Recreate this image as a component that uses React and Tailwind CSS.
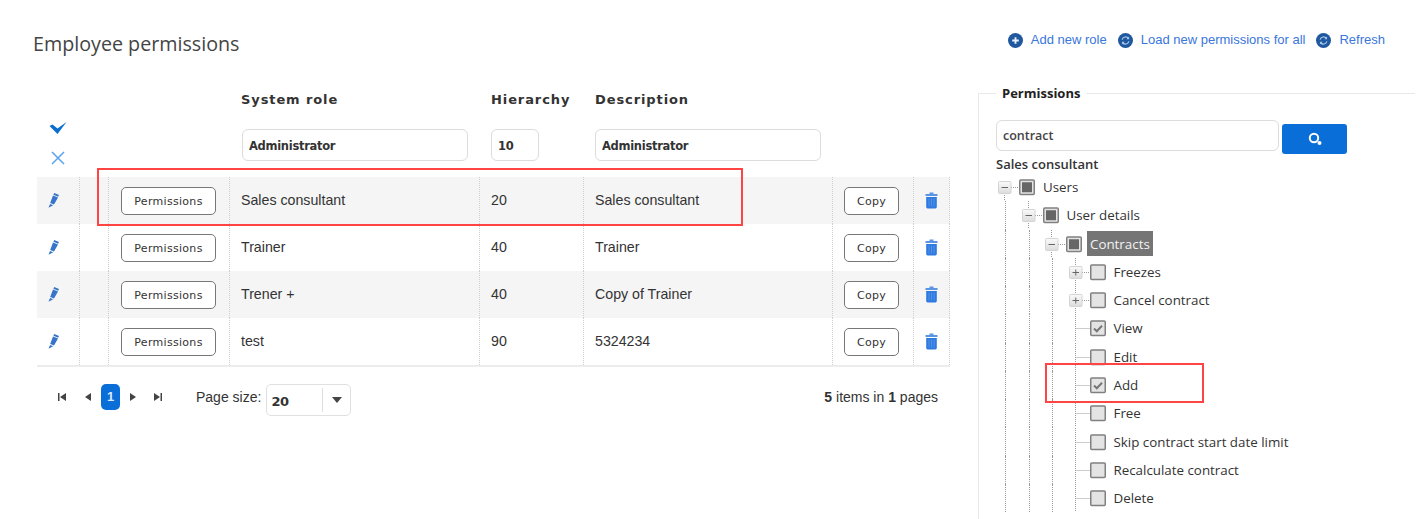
import React from "react";

const cols = "grid grid-cols-[42px_29px_121px_250px_104px_249px_81px_37px]";
const cell = "border-l border-dotted border-[#cfcfcf] flex items-center";

function Pencil() {
  return (
    <svg width="11" height="15" viewBox="0 0 11 15" className="mr-0.5">
      <path d="M6.2 0 L11 2 L10.2 3.7 L5.4 1.7 Z M5 2.5 L10 4.6 L6 11.6 L2.2 10 Z M2 11 L5.2 12.3 L0.5 14.8 Z" fill="#3574c8" />
    </svg>
  );
}

function Trash() {
  return (
    <svg width="13" height="17" viewBox="0 0 13 17">
      <path d="M4.5 0.5 h4 v1.5 h4 v2 h-12 v-2 h4 Z" fill="#5a94e4" />
      <path d="M1.2 5 h10.6 v10 a1.4 1.4 0 0 1 -1.4 1.4 h-7.8 a1.4 1.4 0 0 1 -1.4 -1.4 Z" fill="#2f7ae0" />
      <path d="M4 6.5 v8 M6.5 6.5 v8 M9 6.5 v8" stroke="#5f9cea" strokeWidth="0.7" />
    </svg>
  );
}

function CircleIcon({ kind }) {
  return (
    <svg width="15" height="15" viewBox="0 0 16 16" className="shrink-0">
      <circle cx="8" cy="8" r="8" fill="#20589f" />
      {kind === "plus" ? (
        <path d="M8 4.5 v7 M4.5 8 h7" stroke="#e8f0fa" strokeWidth="2" />
      ) : (
        <>
          <path d="M4.4 7 A3.8 3.8 0 0 1 11 5.6 M11.6 9 A3.8 3.8 0 0 1 5 10.4" fill="none" stroke="#a9c8ec" strokeWidth="1.3" />
          <path d="M11.8 3.8 v2.8 h-2.8 Z M4.2 12.2 v-2.8 h2.8 Z" fill="#a9c8ec" />
        </>
      )}
    </svg>
  );
}

function Action({ kind, children }) {
  return (
    <a className="flex items-center gap-[8px] text-[13px] text-[#3a76dc] font-['Liberation_Sans',sans-serif]">
      <CircleIcon kind={kind} />
      {children}
    </a>
  );
}

function OutlineButton({ w, children }) {
  return (
    <button className={`${w} h-[28px] rounded-[5px] border border-[#777] bg-white pt-[3px] text-[11px] tracking-[0.3px] text-[#333] font-['DejaVu_Sans',sans-serif]`}>
      {children}
    </button>
  );
}

function Row({ name, level, desc, odd }) {
  const text = "pl-[11px] text-[14.2px] text-[#333] font-['Liberation_Sans',sans-serif]";
  return (
    <div className={`${cols} h-[47px] ${odd ? "bg-[#f5f5f5]" : "bg-white"}`}>
      <div className="flex items-center justify-center pr-[8px]"><Pencil /></div>
      <div className={cell} />
      <div className={`${cell} pl-3`}><OutlineButton w="w-[95px]">Permissions</OutlineButton></div>
      <div className={`${cell} ${text}`}>{name}</div>
      <div className={`${cell} ${text}`}>{level}</div>
      <div className={`${cell} ${text}`}>{desc}</div>
      <div className={`${cell} pl-[11px]`}><OutlineButton w="w-[55px]">Copy</OutlineButton></div>
      <div className={`${cell} border-r pl-[11px]`}><Trash /></div>
    </div>
  );
}

function EditInput({ w, value }) {
  return (
    <input
      readOnly
      value={value}
      className={`${w} h-[32px] rounded-[6px] border border-[#dcdcdc] bg-white px-[6px] pt-[2px] text-[11.5px] font-bold text-[#333] font-['DejaVu_Sans',sans-serif] tracking-[-0.3px] outline-none`}
    />
  );
}

function PagerIcon({ d }) {
  return (
    <svg width="10" height="10" viewBox="0 0 10 10" className="shrink-0">
      <path d={d} fill="#444" />
    </svg>
  );
}

function NodeIcon({ exp, check, first }) {
  return (
    <svg width="47" height="28" viewBox="0 0 47 28" className="shrink-0">
      <path d={`M9.5 ${first ? 14 : 0} V28 M${exp ? 16 : 9.5} 14.5 H24`} stroke="#999" strokeDasharray="1 1" fill="none" />
      {exp && (
        <>
          <defs>
            <linearGradient id="nodeBox" x1="0" y1="0" x2="0" y2="1">
              <stop offset="0" stopColor="#fafafa" />
              <stop offset="1" stopColor="#dcdcdc" />
            </linearGradient>
          </defs>
          <rect x="3.5" y="8.5" width="12.5" height="12" rx="1" fill="url(#nodeBox)" stroke="#d4d4d4" />
          <path d={exp === "minus" ? "M6.5 14.5 h6.5" : "M6.5 14.5 h6.5 M9.75 11.5 v6"} stroke="#666" strokeWidth="1" />
        </>
      )}
      <rect x="24.75" y="7" width="14.5" height="14.5" rx="1" fill="#e4e4e4" stroke="#808080" strokeWidth="1.5" />
      {check === "mixed" && <rect x="27" y="9.25" width="10" height="10" fill="#666" />}
      {check === "on" && <path d="M28 14.5 l2.8 2.8 l5.2 -5.6" fill="none" stroke="#777" strokeWidth="2" />}
    </svg>
  );
}

const tree = [
  { l: 0, t: "Users", exp: "minus", c: "mixed", first: true },
  { l: 1, t: "User details", exp: "minus", c: "mixed" },
  { l: 2, t: "Contracts", exp: "minus", c: "mixed", sel: true },
  { l: 3, t: "Freezes", exp: "plus" },
  { l: 3, t: "Cancel contract", exp: "plus" },
  { l: 3, t: "View", c: "on" },
  { l: 3, t: "Edit" },
  { l: 3, t: "Add", c: "on" },
  { l: 3, t: "Free" },
  { l: 3, t: "Skip contract start date limit" },
  { l: 3, t: "Recalculate contract" },
  { l: 3, t: "Delete" },
];

function TreeRow({ n }) {
  const guides = [];
  for (let i = 0; i < n.l; i++) guides.push(<div key={i} className="ml-[9px] mr-[13.5px] w-px shrink-0 border-l border-dotted border-[#999]" />);
  return (
    <div className="flex h-[28.27px] items-stretch">
      {guides}
      <div className="-ml-px flex items-center">
        <NodeIcon exp={n.exp} check={n.c} first={n.first} />
        <span className={`-ml-[2px] flex h-[25px] items-center px-[3px] text-[13.35px] font-['Open_Sans',sans-serif] ${n.sel ? "bg-[#757575] text-[#f2f2f2]" : "text-[#333]"}`}>
          {n.t}
        </span>
      </div>
    </div>
  );
}

export default function App() {
  return (
    <div className="relative h-[519px] w-[1428px] overflow-hidden bg-white">
      <header className="flex h-[88px] items-start justify-between pl-[33px] pr-[43px]">
        <h1 className="mt-[29px] text-[19.7px] leading-[30px] text-[#444] font-['Open_Sans',sans-serif]">Employee permissions</h1>
        <nav className="mt-[32px] flex h-4 items-center gap-[11px]">
          <Action kind="plus">Add new role</Action>
          <Action kind="refresh">Load new permissions for all</Action>
          <Action kind="refresh">Refresh</Action>
        </nav>
      </header>

      <main className="flex items-start pl-[37px]">
        <section className="w-[913px] shrink-0">
          <div className={`${cols} h-[22px] items-center pt-[1px] text-[13px] font-bold tracking-[0.9px] text-[#333] font-['DejaVu_Sans',sans-serif]`}>
            <div className="col-start-4 pl-3">System role</div>
            <div className="pl-3">Hierarchy</div>
            <div className="pl-3">Description</div>
          </div>
          <div className={`${cols} h-[67px]`}>
            <div className="flex flex-col items-center pr-[1px] pt-[12px] gap-[17px]">
              <svg width="18" height="12" viewBox="0 0 18 12"><path d="M0.5 4 L3.5 2.5 L8.5 6.5 L17.5 0 L8.5 12 Z" fill="#0a6ed1" /></svg>
              <svg width="14" height="14" viewBox="0 0 14 14"><path d="M1 1 L13 13 M13 1 L1 13" stroke="#5aa2ee" strokeWidth="1.5" /></svg>
            </div>
            <div />
            <div />
            <div className="pl-[13px] pt-[19px]"><EditInput w="w-[226px]" value="Administrator" /></div>
            <div className="pl-3 pt-[19px]"><EditInput w="w-[48px]" value="10" /></div>
            <div className="pl-3 pt-[19px]"><EditInput w="w-[226px]" value="Administrator" /></div>
          </div>
          <div className="border-b-2 border-[#ececec]">
            <Row name="Sales consultant" level="20" desc="Sales consultant" odd />
            <Row name="Trainer" level="40" desc="Trainer" />
            <Row name="Trener +" level="40" desc="Copy of Trainer" odd />
            <Row name="test" level="90" desc="5324234" />
          </div>
          <div className="mt-[17px] flex h-[33px] items-start font-['Liberation_Sans',sans-serif] text-[14px] text-[#333]">
            <div className="flex items-start pl-[20px]">
              <div className="flex h-[26px] items-center"><PagerIcon d="M1 1 h1.5 v8 h-1.5 Z M9 1 v8 l-6 -4 Z" /></div>
              <div className="ml-[16px] flex h-[26px] items-center"><PagerIcon d="M8 1 v8 l-6 -4 Z" /></div>
              <div className="ml-[8px] flex h-[26px] w-[19px] items-center justify-center rounded-[5px] bg-[#0a6ed9] text-[13px] font-bold text-[#dce9f8]">1</div>
              <div className="ml-[8px] flex h-[26px] items-center"><PagerIcon d="M2 1 v8 l6 -4 Z" /></div>
              <div className="ml-[15px] flex h-[26px] items-center"><PagerIcon d="M1 1 v8 l6 -4 Z M7.5 1 h1.5 v8 h-1.5 Z" /></div>
            </div>
            <span className="ml-[33px] flex h-[26px] items-center">Page size:</span>
            <div className="ml-[5px] flex h-[32px] w-[85px] items-center rounded-[5px] border border-[#e0e0e0] bg-white">
              <span className="w-[55px] pl-[4px] pt-[3px] text-[13px] font-bold font-['DejaVu_Sans',sans-serif] tracking-[-0.3px]">20</span>
              <div className="h-[24px] w-px bg-[#ddd]" />
              <svg width="12" height="8" viewBox="0 0 12 8" className="ml-[8px]"><path d="M1 1 h10 l-5 6 Z" fill="#444" /></svg>
            </div>
            <span className="ml-auto mr-[12px] flex h-[26px] items-center whitespace-pre"><b>5</b> items in <b>1</b> pages</span>
          </div>
        </section>

        <fieldset className="ml-[28px] mr-[13px] mt-[-4px] min-h-[440px] min-w-0 flex-1 border-l border-t border-[#e8e8e8] pl-[17px]">
          <legend className="px-[6px] text-[13px] font-bold leading-[18px] text-[#222] font-['Open_Sans',sans-serif]">Permissions</legend>
          <div className="mt-[18px] flex items-start gap-[3px]">
            <input readOnly value="contract" className="h-[31px] w-[283px] rounded-[6px] border border-[#dcdcdc] bg-white px-[6px] text-[12.5px] font-semibold text-[#444] font-['Open_Sans',sans-serif] outline-none" />
            <button className="mt-[4px] flex h-[30px] w-[65px] items-center justify-center rounded-[3px] bg-[#0a6ed9]">
              <svg width="16" height="16" viewBox="0 0 16 16">
                <circle cx="7" cy="7" r="4.2" fill="none" stroke="#fff" strokeWidth="2" />
                <circle cx="12.5" cy="12" r="2" fill="#fff" />
              </svg>
            </button>
          </div>
          <div className="text-[13px] font-semibold leading-[20px] text-[#333] font-['Open_Sans',sans-serif]">Sales consultant</div>
          <div className="-mt-px">
            {tree.map((n, i) => <TreeRow key={i} n={n} />)}
          </div>
        </fieldset>
      </main>

      <div className="absolute left-[97px] top-[168px] h-[58px] w-[646px] border-2 border-[#f44]" />
      <div className="absolute left-[1045px] top-[363px] h-[40px] w-[159px] border-2 border-[#f44]" />
    </div>
  );
}
